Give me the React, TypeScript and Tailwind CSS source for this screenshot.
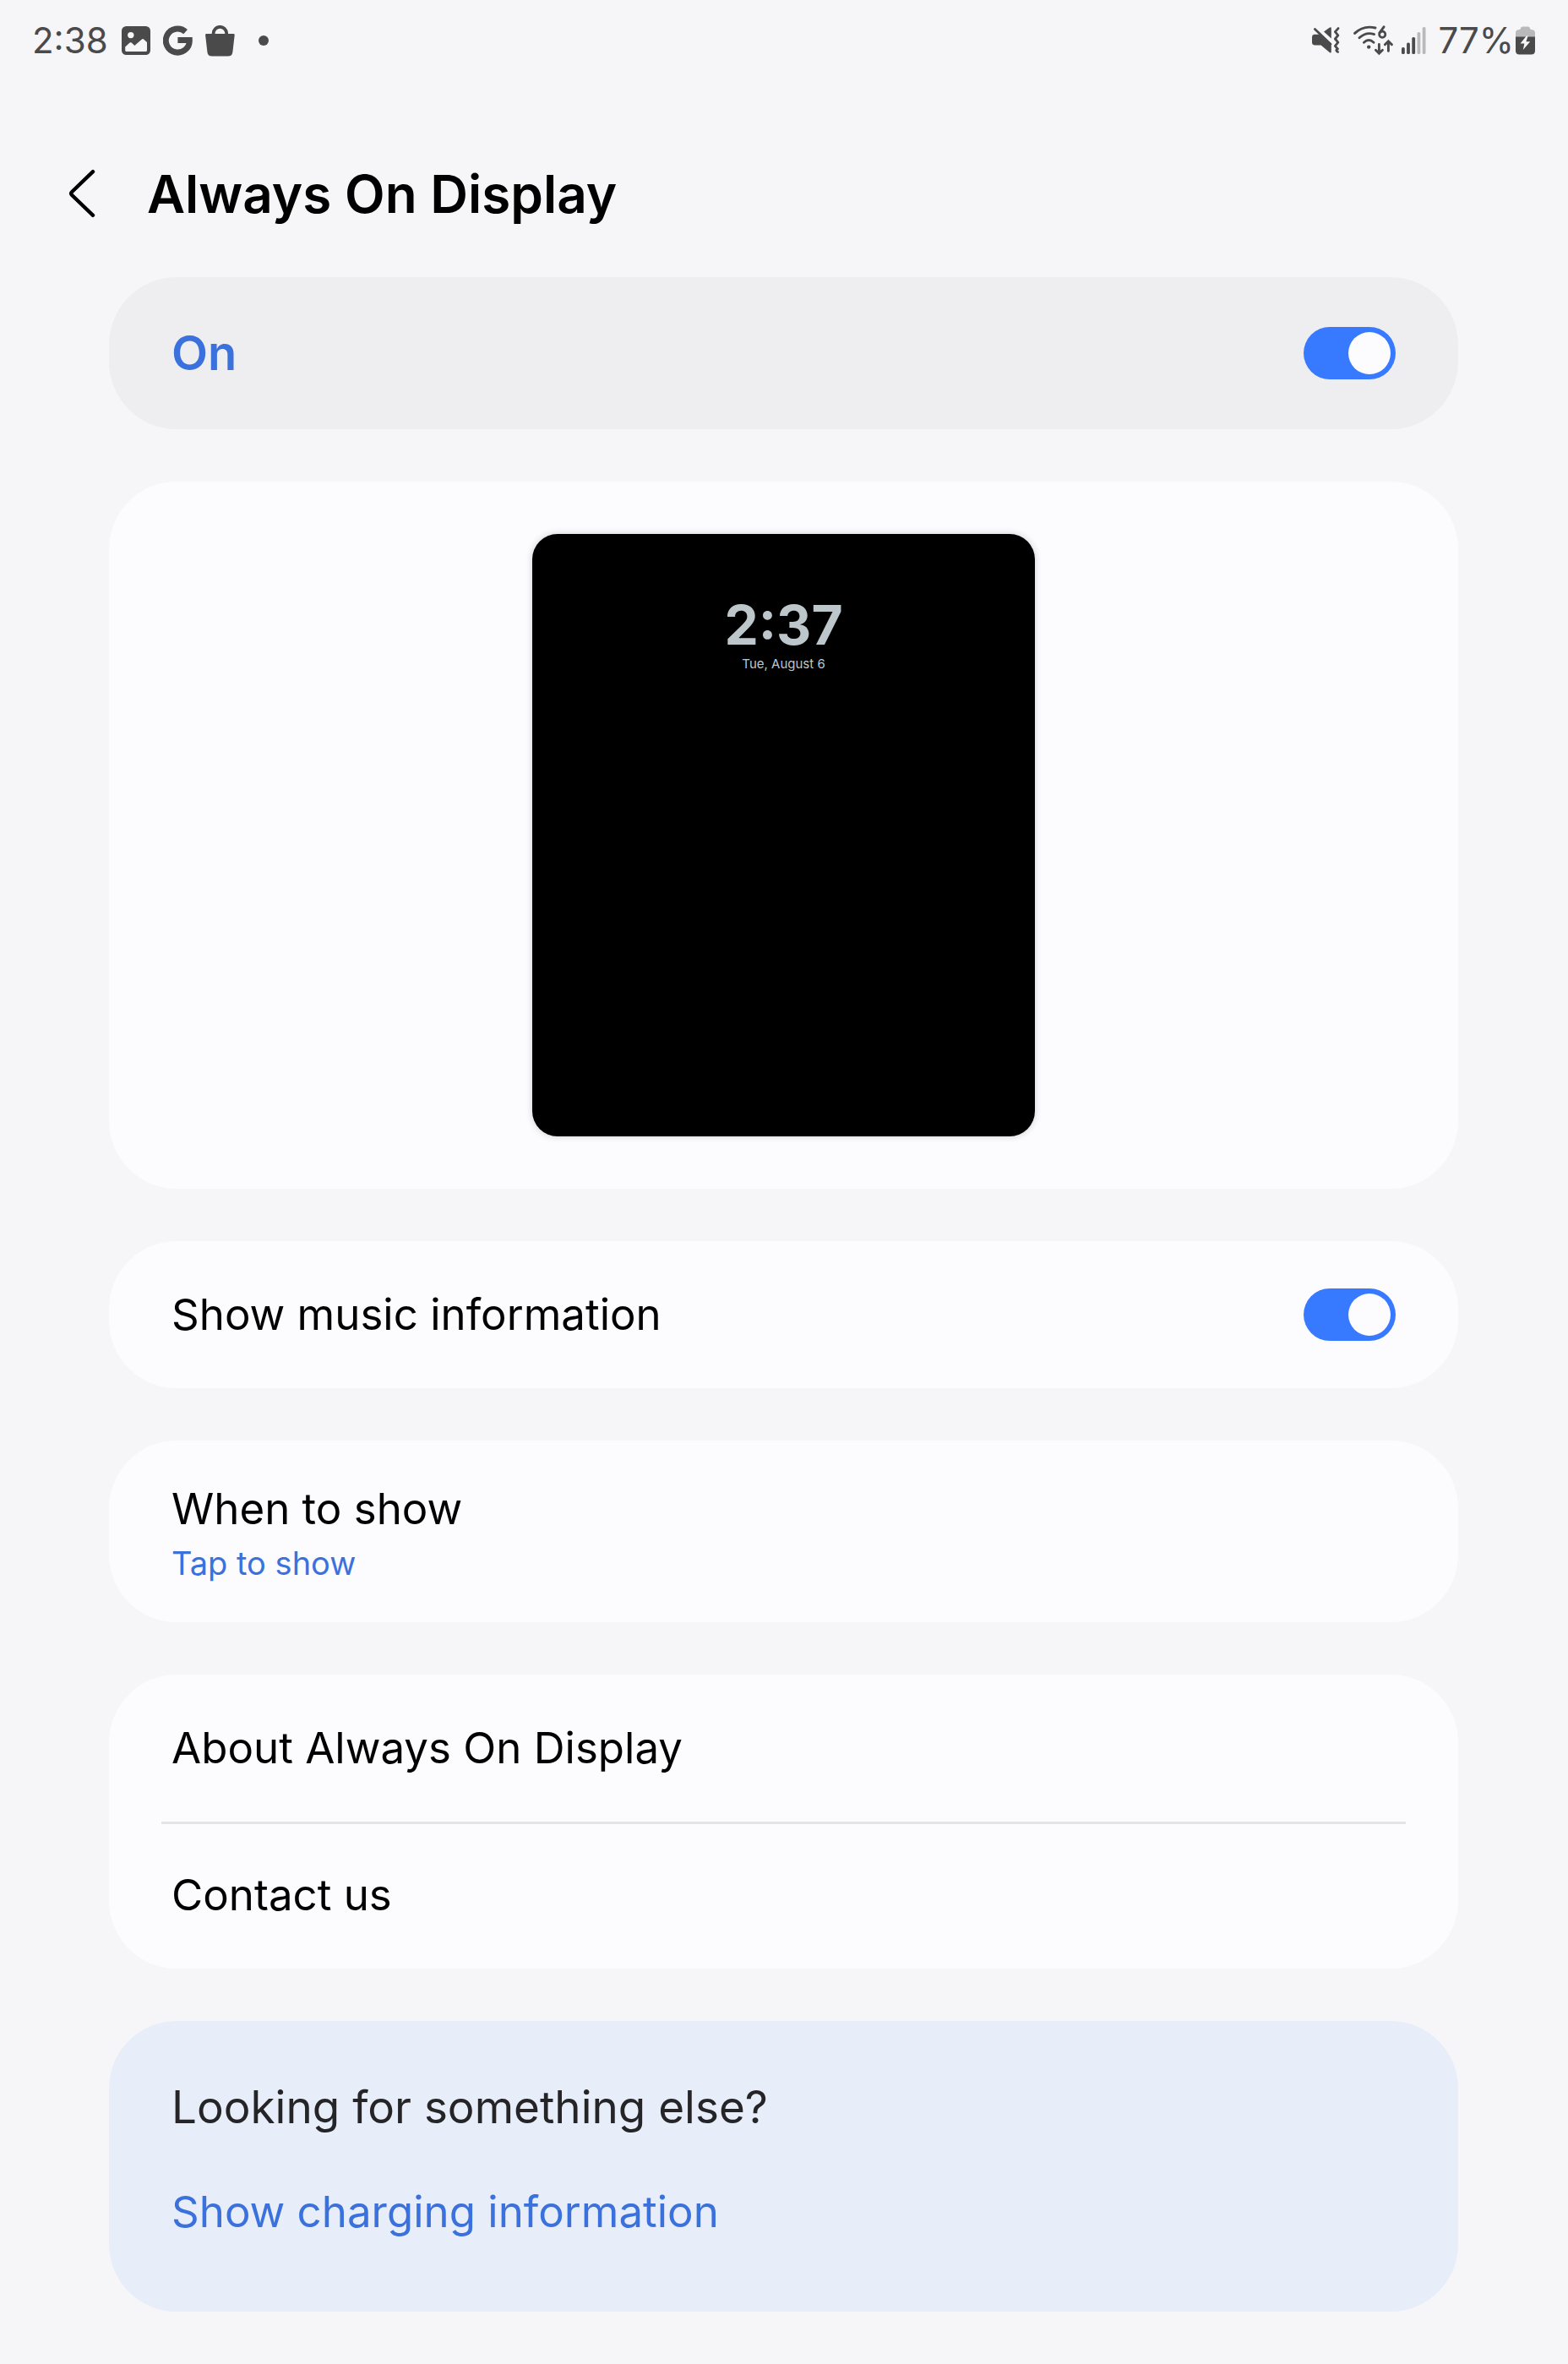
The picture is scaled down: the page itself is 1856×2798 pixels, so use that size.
import React, { useState } from "react";

function GalleryIcon() {
  return (
    <svg width="34" height="34" viewBox="0 0 34 34" aria-hidden="true">
      <rect width="34" height="34" rx="5.5" fill="#4a4a4a" />
      <circle cx="10.8" cy="10.6" r="3.7" fill="#f6f6f8" />
      <path
        d="M4.2 24.6 L9.6 19.6 Q10.6 18.7 11.7 19.6 L15.3 23 L23.9 15.4 Q25 14.5 26.1 15.4 L30 19 V28.4 Q30 30 28.4 30 H5.8 Q4.2 30 4.2 28.4 Z"
        fill="#f6f6f8"
      />
    </svg>
  );
}

function GoogleIcon() {
  return (
    <svg width="35" height="36" viewBox="0 0 35 36" aria-hidden="true">
      <path
        d="M26.6 7.6 A14 14 0 1 0 31.3 17.6 H17.4"
        fill="none"
        stroke="#4a4a4a"
        strokeWidth="7"
      />
    </svg>
  );
}

function BagIcon() {
  return (
    <svg width="35" height="37" viewBox="0 0 35 37" aria-hidden="true">
      <path
        d="M1.4 10 H33.4 Q34.8 10 34.7 11.4 L32.4 31.4 Q31.8 36.6 26.6 36.6 H8.2 Q3 36.6 2.4 31.4 L0.1 11.4 Q0 10 1.4 10 Z"
        fill="#4a4a4a"
      />
      <path
        d="M9.6 12 V9.6 A7.8 7.8 0 0 1 25.2 9.6 V12"
        fill="none"
        stroke="#4a4a4a"
        strokeWidth="3.8"
      />
    </svg>
  );
}

function MuteVibrateIcon() {
  return (
    <svg width="33" height="32" viewBox="0 0 33 32" aria-hidden="true">
      <path d="M22.8 0.8 V13.4 L14 5.6 L20.6 0.8 Q22 -0.2 22.8 0.8 Z" fill="#4a4a4a" />
      <path
        d="M3 8.8 H8.4 L22.8 21.8 V29.6 Q22.4 31 21 30.2 L10.6 21.4 H3 Q0 21.2 0 18 V12.2 Q0 9 3 8.8 Z"
        fill="#4a4a4a"
      />
      <path d="M3.4 2.4 L22 20.2" stroke="#4a4a4a" strokeWidth="2.8" strokeLinecap="round" />
      <path
        d="M31 1.6 L27.4 5.6 L30.8 9.8 L27.4 14 L30.8 18.2 L27.4 22.4 L30.4 26 Q27 27.6 30.6 29.4"
        fill="none"
        stroke="#4a4a4a"
        strokeWidth="2.8"
        strokeLinecap="round"
        strokeLinejoin="round"
      />
    </svg>
  );
}

function WifiIcon() {
  return (
    <svg width="47" height="36" viewBox="0 0 47 36" aria-hidden="true">
      <g fill="none" stroke="#4a4a4a" strokeWidth="2.9" strokeLinecap="round">
        <path d="M1.6 9.4 Q11.8 -0.4 26 3" />
        <path d="M7 14.8 Q14.8 7.4 24.6 10.6" />
        <path d="M12.4 20.2 Q18.2 14.8 24 20.2" />
        <path d="M30.4 22.4 V32.4 M26.4 29.2 L30.4 33.2 L34.4 29.2" />
        <path d="M41.4 30.4 V19.6 M37.4 22.8 L41.4 18.8 L45.4 22.8" />
        <path d="M36 1.8 L31 8.8" />
      </g>
      <circle cx="18.2" cy="25.6" r="2.2" fill="#4a4a4a" />
      <circle cx="34.2" cy="10.8" r="3.6" fill="none" stroke="#4a4a4a" strokeWidth="2.7" />
    </svg>
  );
}

function SignalIcon() {
  return (
    <svg width="29" height="32" viewBox="0 0 29 32" aria-hidden="true">
      <rect x="0" y="24" width="3.8" height="8" rx="1.6" fill="#4a4a4a" />
      <rect x="6.1" y="18.4" width="3.8" height="13.6" rx="1.6" fill="#4a4a4a" />
      <rect x="12.3" y="12" width="3.8" height="20" rx="1.6" fill="#4a4a4a" />
      <rect x="18.5" y="6" width="3.8" height="26" rx="1.6" fill="#b9b9bb" />
      <rect x="24.7" y="0" width="3.8" height="32" rx="1.6" fill="#b9b9bb" />
    </svg>
  );
}

function BatteryIcon() {
  return (
    <svg width="23" height="34" viewBox="0 0 23 34" aria-hidden="true">
      <path
        d="M0 13 V8 Q0 4.4 3.6 4.2 Q6 4.2 6 2.4 Q6.2 0.4 8.4 0.4 H14.6 Q16.8 0.4 17 2.4 Q17 4.2 19.4 4.2 Q23 4.4 23 8 V13 Z"
        fill="#b9b9bb"
      />
      <path d="M0 12.6 H23 V29 Q23 33.6 18.4 33.6 H4.6 Q0 33.6 0 29 Z" fill="#4a4a4a" />
      <path d="M12.8 11.6 L5.6 20.6 H10.4 L8.8 28 L17.2 18.2 H12.4 L14.6 11.6 Z" fill="#f6f6f8" />
    </svg>
  );
}

function StatusBar() {
  return (
    <div className="flex h-24 items-center justify-between pr-[39px] pl-[38px] text-[42px] leading-none text-[#4a4a4a]">
      <div className="flex items-center">
        <span className="mr-4">2:38</span>
        <span className="flex items-center gap-[15px]">
          <GalleryIcon />
          <GoogleIcon />
          <BagIcon />
        </span>
        <span className="ml-7 size-3 rounded-full bg-[#4a4a4a]" />
      </div>
      <div className="flex items-center">
        <span className="mr-4">
          <MuteVibrateIcon />
        </span>
        <span className="mr-2.5">
          <WifiIcon />
        </span>
        <span className="mr-3.5">
          <SignalIcon />
        </span>
        <span className="mr-0.5">77%</span>
        <BatteryIcon />
      </div>
    </div>
  );
}

function Toggle({ id, checked, onChange }: { id: string; checked: boolean; onChange: (v: boolean) => void }) {
  return (
    <input
      id={id}
      type="checkbox"
      role="switch"
      checked={checked}
      onChange={(e) => onChange(e.target.checked)}
      className="flex h-[62px] w-[109px] shrink-0 cursor-pointer appearance-none items-center rounded-full bg-[#b4b4b8] p-1.5 before:size-[50px] before:rounded-full before:bg-[#fcfcff] before:content-[''] checked:justify-end checked:bg-[#387aff]"
    />
  );
}

export default function App() {
  const [on, setOn] = useState(true);
  const [music, setMusic] = useState(true);

  return (
    <div className="min-h-screen bg-[#f6f6f8] font-['Inter',sans-serif] text-black">
      <StatusBar />

      <header className="flex h-[232px] items-center gap-[60px] pt-9 pl-20">
        <button type="button" aria-label="Back" className="shrink-0">
          <svg width="34" height="60" viewBox="0 0 34 60" aria-hidden="true">
            <path
              d="M30 3.2 L5.2 27 Q3.2 29 5.2 31 L30 54.8"
              fill="none"
              stroke="#000"
              strokeWidth="4.4"
              strokeLinecap="round"
              strokeLinejoin="round"
            />
          </svg>
        </button>
        <h1 className="text-[62px] leading-none font-semibold">Always On Display</h1>
      </header>

      <main className="mr-[130px] ml-[129px] flex flex-col gap-[62px] pb-[62px] text-[51px] leading-[68px]">
        <section className="flex h-[180px] items-center justify-between rounded-[80px] bg-[#eeeef0] px-[74px]">
          <label htmlFor="aod" className="text-[56px] font-semibold text-[#3b71dc]">
            On
          </label>
          <Toggle id="aod" checked={on} onChange={setOn} />
        </section>

        <section className="flex justify-center rounded-[80px] bg-[#fcfcff] py-[62px]">
          <div className="flex h-[713px] w-[595px] flex-col items-center rounded-[30px] bg-black pt-[76px] text-[#bdc7cb] shadow-[0_0_8px_rgba(0,0,0,0.18)]">
            <time className="text-[64px] leading-[64px] font-bold">2:37</time>
            <span className="mt-1 text-[15px] leading-5">Tue, August 6</span>
          </div>
        </section>

        <section className="flex h-[174px] items-center justify-between rounded-[80px] bg-[#fcfcff] px-[74px]">
          <label htmlFor="music">Show music information</label>
          <Toggle id="music" checked={music} onChange={setMusic} />
        </section>

        <section className="rounded-[80px] bg-[#fcfcff]">
          <button type="button" className="block w-full px-[74px] pt-[47px] pb-10 text-left">
            <span className="block">When to show</span>
            <span className="block text-[38px] leading-[60px] text-[#3b71dc]">Tap to show</span>
          </button>
        </section>

        <section className="rounded-[80px] bg-[#fcfcff]">
          <button type="button" className="block h-[174px] w-full px-[74px] text-left">
            About Always On Display
          </button>
          <hr className="mx-[62px] -mb-[3px] h-[3px] border-0 bg-[#e4e4e6]" />
          <button type="button" className="block h-[174px] w-full px-[74px] text-left">
            Contact us
          </button>
        </section>

        <section className="flex flex-col items-start gap-14 rounded-[80px] bg-[#e7edf9] px-[74px] pt-[68px] pb-[84px]">
          <h2 className="text-[53px] text-[#252528]">Looking for something else?</h2>
          <a href="#charging" className="text-[#3b71dc]">
            Show charging information
          </a>
        </section>
      </main>
    </div>
  );
}
